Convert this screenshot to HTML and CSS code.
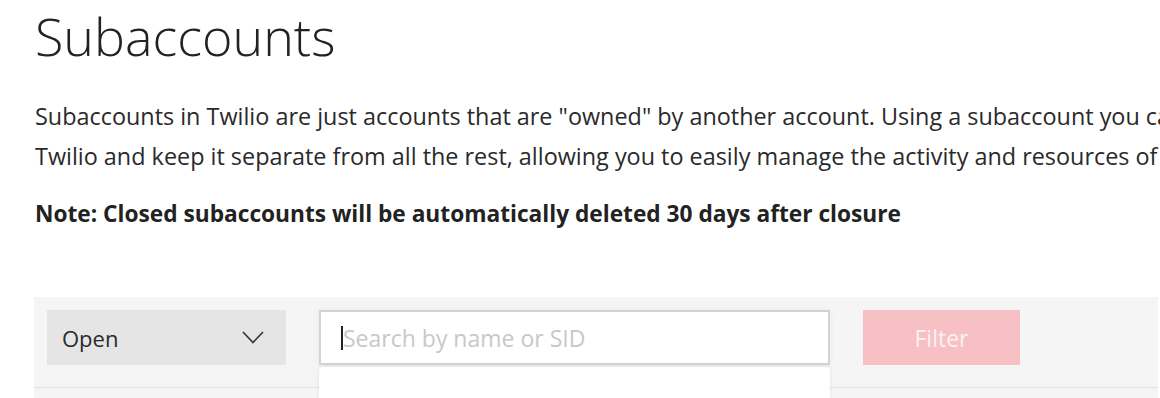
FILE: index.html
```html
<!DOCTYPE html>
<html lang="en">
<head>
<meta charset="utf-8">
<title>Subaccounts</title>
<link rel="stylesheet" href="styles.css">
</head>
<body>
<main class="page">
  <h1 class="title">Subaccounts</h1>
  <p class="intro">Subaccounts in Twilio are just accounts that are "owned" by another account. Using a subaccount you can segment each of your customers' usage in<br>Twilio and keep it separate from all the rest, allowing you to easily manage the activity and resources of each customer independently.</p>
  <p class="note">Note: Closed subaccounts will be automatically deleted 30 days after closure</p>

  <section class="panel">
    <div class="toolbar">
      <div class="select">
        <span>Open</span>
        <svg class="chevron" width="22" height="13" viewBox="0 0 22 13"><polyline points="1,1 11,11.5 21,1" fill="none" stroke="#333" stroke-width="1.6"/></svg>
      </div>
      <div class="search">
        <div class="input"><span class="caret"></span><span class="placeholder">Search by name or SID</span></div>
        <div class="dropdown"></div>
      </div>
      <button class="filter" type="button">Filter</button>
    </div>
  </section>
</main>
</body>
</html>
```
FILE: styles.css
```css
html, body {
  margin: 0;
  padding: 0;
  background: #fff;
  overflow: hidden;
}
body {
  font-family: "Open Sans", "Liberation Sans", sans-serif;
  color: #282828;
  width: 1160px;
  height: 398px;
}
.page {
  padding-left: 35px;
  height: 398px;
  overflow: hidden;
}
.title {
  margin: 10px 0 0;
  font-size: 52px;
  line-height: 52px;
  font-weight: 300;
  color: #222;
}
.intro {
  margin: 34px 0 0;
  font-size: 23.4px;
  line-height: 40px;
  white-space: nowrap;
  overflow: hidden;
  color: #2a2a2a;
}
.note {
  margin: 18px 0 0;
  font-size: 22.7px;
  line-height: 40px;
  font-weight: 700;
  white-space: nowrap;
  color: #222;
}
.panel {
  margin: 63px 0 0 -1px;
  width: 1124px;
  height: 101px;
  background: #f5f5f5;
}
.toolbar {
  display: flex;
  align-items: flex-start;
  gap: 33px;
  padding: 13px 13px 0;
  height: 77px;
  border-bottom: 1px solid #e2e2e2;
}
.select {
  width: 239px;
  height: 55px;
  box-sizing: border-box;
  background: #e5e5e5;
  display: flex;
  align-items: center;
  justify-content: space-between;
  padding: 0 22px 0 15px;
  font-size: 22px;
  color: #2a2a2a;
}
.chevron {
  display: block;
}
.search {
  position: relative;
  width: 511px;
}
.input {
  height: 55px;
  box-sizing: border-box;
  border: 2px solid #d3d3d3;
  background: #fff;
  display: flex;
  align-items: center;
  padding-left: 20px;
  font-size: 23px;
  box-shadow: 0 0 6px rgba(0,0,0,0.06);
  white-space: nowrap;
}
.caret {
  width: 2px;
  height: 24px;
  background: #222;
}
.placeholder {
  color: #c8c8c8;
}
.dropdown {
  position: absolute;
  left: 0;
  top: 57px;
  width: 511px;
  height: 31px;
  background: #fff;
  border-radius: 4px 4px 0 0;
  box-shadow: 0 0 4px rgba(0,0,0,0.08);
}
.filter {
  width: 157px;
  height: 55px;
  border: 0;
  background: #f7c0c4;
  color: #fdf1f2;
  font-family: inherit;
  font-size: 23px;
  padding: 0;
  cursor: default;
}
```
